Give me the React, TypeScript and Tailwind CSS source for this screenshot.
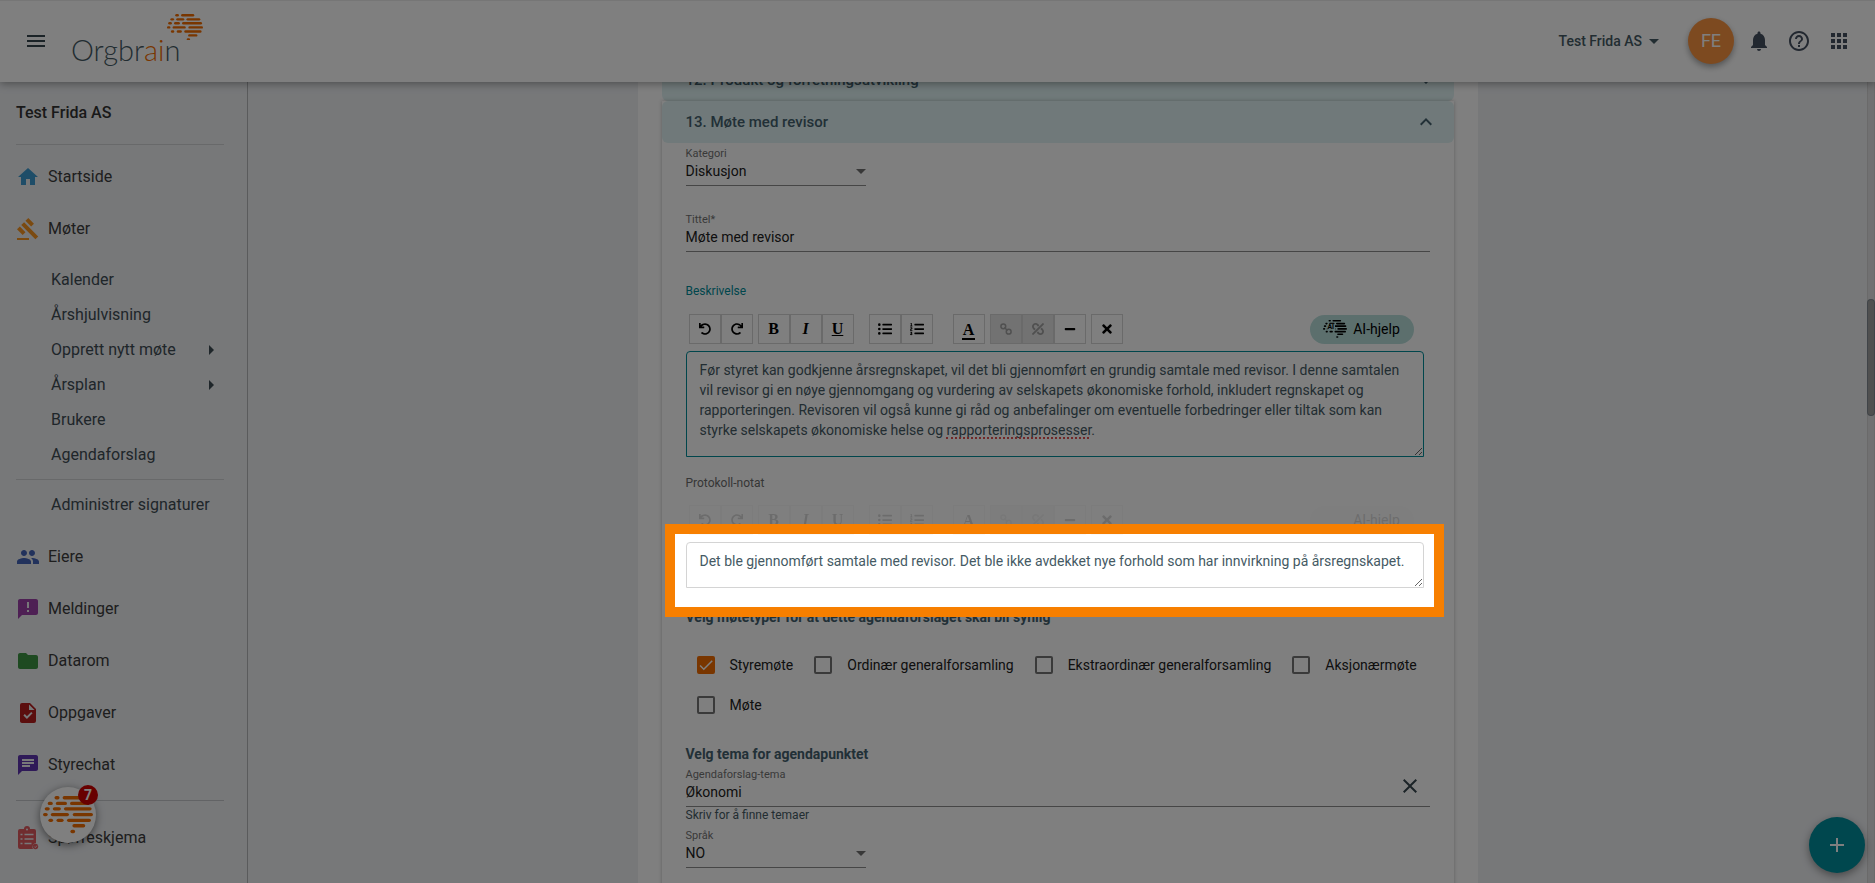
import React, { useState } from "react";
import {
  FaListOl,
  FaListUl,
  FaMinus,
  FaRedo,
  FaTimes,
  FaUndo,
  FaUnlink,
} from "react-icons/fa";
import {
  MdAdd,
  MdAnnouncement,
  MdApps,
  MdArrowDropDown,
  MdArrowRight,
  MdChat,
  MdCheck,
  MdClose,
  MdExpandLess,
  MdExpandMore,
  MdFolder,
  MdGavel,
  MdHelpOutline,
  MdHome,
  MdMenu,
  MdNotifications,
  MdPeople,
} from "react-icons/md";

const BRAIN_BARS = [
  [34, 0, 15],
  [58, 0, 54],
  [14, 17, 15],
  [38, 17, 33],
  [80, 17, 57],
  [5, 33, 15],
  [29, 33, 24],
  [62, 33, 82],
  [0, 50, 14],
  [23, 50, 54],
  [88, 50, 60],
  [16, 67, 14],
  [40, 67, 21],
  [71, 67, 71],
  [87, 83, 38],
  [81, 100, 14],
];

const Brain: React.FC<{ className: string; children?: React.ReactNode }> = ({
  className,
  children,
}) => (
  <svg viewBox="0 0 148 110" className={className} fill="currentColor">
    {BRAIN_BARS.map(([x, y, width]) => (
      <rect key={`${x}-${y}`} x={x} y={y} width={width} height="10" rx="5" />
    ))}
    {children}
  </svg>
);

const TaskIcon = () => (
  <svg viewBox="0 0 24 24" className="size-6 text-[#b71c1c]" fill="currentColor">
    <path
      fillRule="evenodd"
      d="M14 2H6a2 2 0 0 0-2 2v16c0 1.100.9 2 2 2h12a2 2 0 0 0 2-2V8l-6-6zM10.940 18L7.400 14.460l1.410-1.410 2.120 2.120 4.240-4.240 1.410 1.410L10.940 18zM13 9V3.500L18.500 9H13z"
    />
  </svg>
);

const SurveyIcon = () => (
  <svg viewBox="0 0 24 24" className="size-6" fill="none">
    <path
      d="M4 3h4a3 3 0 0 1 6 0h4a2 2 0 0 1 2 2v12a4 4 0 0 0-3 6H4a2 2 0 0 1-2-2V5a2 2 0 0 1 2-2z"
      fill="#e05a5f"
    />
    <circle cx="11" cy="3.500" r="1" fill="#eef0f3" />
    <path
      d="M4.500 8.500h2M4.500 13h2M4.500 17.500h2M8.500 8.500h9M8.500 13h9M8.500 17.500h7"
      stroke="#eef0f3"
      strokeWidth="1.600"
    />
    <circle cx="19.500" cy="20.500" r="2.700" fill="#e05a5f" />
    <path d="M18.300 20.600l1 1 1.700-2" stroke="#eef0f3" strokeWidth="0.800" />
  </svg>
);

const ChainIcon = () => (
  <svg viewBox="0 0 12 12" className="size-3" fill="none" stroke="currentColor" strokeWidth="1.500">
    <circle cx="3.300" cy="3.300" r="2.400" />
    <circle cx="8.700" cy="8.700" r="2.400" />
    <path d="M4.500 4.500l3 3" />
  </svg>
);

const NAV_ITEMS = [
  { label: "Eiere", icon: <MdPeople className="size-6 text-[#4464b8]" /> },
  { label: "Meldinger", icon: <MdAnnouncement className="size-6 text-[#9c40a8]" /> },
  { label: "Datarom", icon: <MdFolder className="size-6 text-[#3c9442]" /> },
  { label: "Oppgaver", icon: <TaskIcon /> },
  { label: "Styrechat", icon: <MdChat className="size-6 text-[#5e35b1]" /> },
];

const SUB_ITEMS = [
  { label: "Kalender" },
  { label: "Årshjulvisning" },
  { label: "Opprett nytt møte", expandable: true },
  { label: "Årsplan", expandable: true },
  { label: "Brukere" },
  { label: "Agendaforslag" },
];

const MEETING_TYPES = [
  "Styremøte",
  "Ordinær generalforsamling",
  "Ekstraordinær generalforsamling",
  "Aksjonærmøte",
  "Møte",
];

const Header = () => (
  <header className="relative z-20 flex h-[82px] shrink-0 items-center border-t border-[#ececec] bg-white px-6 pb-[2px] text-[#455a64] shadow-[0_2px_8px_rgba(0,0,0,0.35)]">
    <button aria-label="Meny" className="text-[#37474f]">
      <MdMenu className="size-6" />
    </button>
    <a href="#" className="relative mt-[18px] ml-[23px] font-['Lato',sans-serif] text-[29px] leading-9 font-light">
      Orgbr<span className="text-[#f26d00]">ai</span>n
      <Brain className="absolute -top-[18px] left-24 w-9 text-[#f26d00]" />
    </a>
    <button className="mr-[22px] ml-auto flex items-center text-sm font-medium">
      Test Frida AS
      <MdArrowDropDown className="size-6" />
    </button>
    <button className="mr-[13px] size-[46px] rounded-full bg-[#fb9440] text-lg text-white shadow-[0_3px_6px_rgba(0,0,0,0.35)]">
      FE
    </button>
    <div className="flex gap-4 text-[#455060]">
      <button aria-label="Varsler">
        <MdNotifications className="size-6" />
      </button>
      <button aria-label="Hjelp">
        <MdHelpOutline className="size-6" />
      </button>
      <button aria-label="Apper">
        <MdApps className="size-6" />
      </button>
    </div>
  </header>
);

const NavItem: React.FC<{ label: string; icon: React.ReactNode }> = ({
  label,
  icon,
}) => (
  <a href="#" className="flex h-[52px] items-center gap-2 text-[#3c3c3c]">
    {icon}
    {label}
  </a>
);

const Sidebar = () => (
  <nav className="w-[248px] shrink-0 border-r border-[#b4b6b8] pr-[23px] pl-4 text-base">
    <h2 className="flex h-[63px] items-center border-b border-[#d0d2d4] font-medium text-[#333333]">
      Test Frida AS
    </h2>
    <div className="pt-[6px]">
      <NavItem label="Startside" icon={<MdHome className="size-6 text-[#3d9bd0]" />} />
      <NavItem label="Møter" icon={<MdGavel className="size-6 text-[#f79420]" />} />
    </div>
    <ul className="border-b border-[#d0d2d4] py-[7px] text-[#3f4c54]">
      {SUB_ITEMS.map(({ label, expandable }) => (
        <li key={label}>
          <a href="#" className="flex h-[35px] items-center justify-between pr-px pl-[35px]">
            {label}
            {expandable && <MdArrowRight className="size-6" />}
          </a>
        </li>
      ))}
    </ul>
    <a href="#" className="mb-[2px] flex h-[49px] items-center pl-[35px] text-[#3f4c54]">
      Administrer signaturer
    </a>
    <div className="border-b border-[#c4c7ca] pb-[9px]">
      {NAV_ITEMS.map((item) => (
        <NavItem key={item.label} {...item} />
      ))}
    </div>
    <div className="pt-[11px]">
      <NavItem label="Spørreskjema" icon={<SurveyIcon />} />
    </div>
  </nav>
);

const PanelHeader: React.FC<{ title: string; open?: boolean }> = ({
  title,
  open,
}) => (
  <button
    type="button"
    className="flex h-[42px] w-full items-center justify-between rounded-md bg-[#e0f3f4] pr-4 pl-6 text-[15px] font-medium text-[#44616e]"
  >
    {title}
    {open ? <MdExpandLess className="size-6" /> : <MdExpandMore className="size-6" />}
  </button>
);

const SelectField: React.FC<{ id: string; label: string; value: string }> = ({
  id,
  label,
  value,
}) => (
  <div className="relative w-[180px]">
    <label htmlFor={id} className="block text-[11px] leading-[18px] text-[#737373]">
      {label}
    </label>
    <select
      id={id}
      defaultValue={value}
      className="block w-full appearance-none border-b border-[#8c8c8c] pb-[6px] text-sm leading-4 text-[#212121]"
    >
      <option>{value}</option>
    </select>
    <svg viewBox="0 0 10 5" className="pointer-events-none absolute right-0 bottom-3 w-[10px] text-[#707070]" fill="currentColor">
      <path d="M0 0h10L5 5z" />
    </svg>
  </div>
);

const TextField: React.FC<{ id: string; label: string; value: string }> = ({
  id,
  label,
  value,
}) => (
  <>
    <label htmlFor={id} className="block text-[11px] leading-[18px] text-[#737373]">
      {label}
    </label>
    <input
      id={id}
      defaultValue={value}
      className="block w-full border-b border-[#8c8c8c] pb-[6px] text-sm leading-4 text-[#212121]"
    />
  </>
);

const ToolButton: React.FC<{
  label: string;
  disabled?: boolean;
  children: React.ReactNode;
}> = ({ label, disabled, children }) => (
  <button
    type="button"
    aria-label={label}
    disabled={disabled}
    className="flex h-[30px] w-8 items-center justify-center border border-[#d4d4d4] font-['Liberation_Serif',serif] text-base leading-4 font-bold text-black disabled:bg-[#e4e4e4] disabled:text-[#a0a0a0]"
  >
    {children}
  </button>
);

const Toolbar: React.FC<{ inactive?: boolean }> = ({ inactive }) => (
  <div className={`flex items-center pr-[10px] pl-[3px] ${inactive ? "opacity-15" : ""}`}>
    <div className="mr-[5px] flex">
      <ToolButton label="Angre"><FaUndo className="size-3" /></ToolButton>
      <ToolButton label="Gjør om"><FaRedo className="size-3" /></ToolButton>
    </div>
    <div className="mr-[15px] flex">
      <ToolButton label="Fet">B</ToolButton>
      <ToolButton label="Kursiv"><i>I</i></ToolButton>
      <ToolButton label="Understreket"><u>U</u></ToolButton>
    </div>
    <div className="mr-5 flex">
      <ToolButton label="Punktliste"><FaListUl className="size-[14px]" /></ToolButton>
      <ToolButton label="Nummerert liste"><FaListOl className="size-[14px]" /></ToolButton>
    </div>
    <div className="mr-[5px] flex">
      <ToolButton label="Tekstfarge">
        <span className="border-b-2 border-black px-px pt-1">A</span>
      </ToolButton>
    </div>
    <div className="mr-[5px] flex">
      <ToolButton label="Lenke" disabled><ChainIcon /></ToolButton>
      <ToolButton label="Fjern lenke" disabled><FaUnlink className="size-3 -scale-x-100" /></ToolButton>
      <ToolButton label="Linje"><FaMinus className="size-3" /></ToolButton>
    </div>
    <ToolButton label="Fjern formatering"><FaTimes className="size-[14px]" /></ToolButton>
    <button
      type="button"
      className={`ml-auto flex h-[29px] w-[104px] items-center justify-center gap-[6px] rounded-full text-sm text-black ${
        inactive ? "bg-[#ececec]" : "bg-[#b8dedb]"
      }`}
    >
      <Brain className={inactive ? "w-6 opacity-0" : "w-6"}>
        <rect x="26" y="24" width="48" height="38" className="fill-[#b8dedb]" />
        <text x="28" y="58" fontSize="42" fontWeight="bold">AI</text>
      </Brain>
      AI-hjelp
    </button>
  </div>
);

const DESCRIPTION =
  "Før styret kan godkjenne årsregnskapet, vil det bli gjennomført en grundig samtale med revisor. I denne samtalen vil revisor gi en nøye gjennomgang og vurdering av selskapets økonomiske forhold, inkludert regnskapet og rapporteringen. Revisoren vil også kunne gi råd og anbefalinger om eventuelle forbedringer eller tiltak som kan styrke selskapets økonomiske helse og rapporteringsprosesser.";

const NOTE =
  "Det ble gjennomført samtale med revisor. Det ble ikke avdekket nye forhold som har innvirkning på årsregnskapet.";

const AgendaForm = () => {
  const [types, setTypes] = useState<string[]>(["Styremøte"]);

  const toggleType = (type: string) => {
    setTypes((current) =>
      current.includes(type)
        ? current.filter((item) => item !== type)
        : [...current, type]
    );
  };

  return (
    <form className="px-6 pt-[2px] pb-10">
      <SelectField id="category" label="Kategori" value="Diskusjon" />

      <div className="mt-[25px]">
        <TextField id="title" label="Tittel*" value="Møte med revisor" />
      </div>

      <div className="mt-[31px] mr-[6px]">
        <label htmlFor="description" className="mb-[15px] block text-xs leading-4 text-[#008c99]">
          Beskrivelse
        </label>
        <Toolbar />
        <div className="relative mt-[7px]">
          <textarea
            id="description"
            rows={4}
            spellCheck={false}
            defaultValue={DESCRIPTION}
            className="block w-full resize-y rounded-t border border-[#008c99] px-[13px] pt-2 pb-4 text-sm leading-5 text-[#455a64]"
          />
          {/* spell check mark */}
          <span className="pointer-events-none absolute bottom-[18px] left-[260px] w-[143px] border-b-2 border-dotted border-[#e05050]" />
        </div>
      </div>

      <div className="mt-[18px] mr-[6px]">
        <label htmlFor="note" className="mb-[14px] block text-xs leading-4 text-[#6c6c6c]">
          Protokoll-notat
        </label>
        <Toolbar inactive />
        <div className="relative mt-[7px]">
          <textarea
            id="note"
            rows={1}
            spellCheck={false}
            defaultValue={NOTE}
            className="block w-full resize-y rounded-t border border-[#d4d4d4] px-[13px] pt-2 pb-4 text-sm leading-5 text-[#455a64]"
          />
          {/* tour spotlight, its shadow dims the rest of the page */}
          <div className="pointer-events-none absolute -top-[18px] -right-5 -bottom-[29px] -left-[21px] z-50 border-10 border-[#f77f00] shadow-[0_0_0_9999px_rgba(0,0,0,0.5)]" />
        </div>
      </div>

      <fieldset className="mt-[19px]">
        <legend className="text-sm leading-5 font-bold text-[#44616e]">
          Velg møtetyper for at dette agendaforslaget skal bli synlig
        </legend>
        <div className="mt-[18px] flex flex-wrap gap-x-[21px] pl-[11px]">
          {MEETING_TYPES.map((type) => (
            <label key={type} className="flex h-10 items-center gap-[15px] text-sm text-[#212121]">
              <span className="relative">
                <input
                  type="checkbox"
                  checked={types.includes(type)}
                  onChange={() => toggleType(type)}
                  className="peer block size-[18px] appearance-none rounded-xs border-2 border-[#757575] checked:border-[#f26d00] checked:bg-[#f26d00]"
                />
                <MdCheck className="pointer-events-none absolute inset-0 hidden size-[18px] text-white peer-checked:block" />
              </span>
              {type}
            </label>
          ))}
        </div>
      </fieldset>

      <h3 className="mt-[19px] text-sm leading-5 font-bold text-[#44616e]">
        Velg tema for agendapunktet
      </h3>
      <div className="relative mt-[2px]">
        <TextField id="topic" label="Agendaforslag-tema" value="Økonomi" />
        <button type="button" aria-label="Fjern tema" className="absolute top-2 right-2 text-[#37474f]">
          <MdClose className="size-6" />
        </button>
      </div>
      <p className="mb-1 text-xs leading-4 text-[#455a64]">Skriv for å finne temaer</p>
      <SelectField id="language" label="Språk" value="NO" />
    </form>
  );
};

const App: React.FC = () => {
  return (
    <div className="relative flex h-screen flex-col overflow-hidden bg-[#eef0f3] font-['Roboto',sans-serif]">
      <Header />
      <div className="flex min-h-0 flex-1">
        <Sidebar />
        <main className="-mt-[23px] flex-1">
          <div className="mx-auto w-full max-w-[840px] bg-white px-6">
            <PanelHeader title="12. Produkt og forretningsutvikling" />
            <section className="bg-white shadow-[0_0_4px_rgba(0,0,0,0.25)]">
              <PanelHeader title="13. Møte med revisor" open />
              <AgendaForm />
            </section>
          </div>
        </main>
        <div className="w-2 border-x border-[#d4d4d4] bg-[#e2e2e4] pt-[218px]">
          <div className="h-[115px] rounded bg-[#a0a0a0] ring-1 ring-[#808890]" />
        </div>
      </div>

      <button
        aria-label="Åpne chat"
        className="absolute bottom-10 left-10 z-10 flex size-14 items-center justify-center rounded-full bg-white shadow-[0_2px_8px_rgba(0,0,0,0.5)]"
      >
        <Brain className="w-[50px] text-[#f26d00]" />
        <span className="absolute -top-[2px] -right-[2px] size-5 rounded-full bg-[#d00000] text-sm leading-5 font-bold text-white">
          7
        </span>
      </button>
      <button
        aria-label="Legg til"
        className="absolute right-[10px] bottom-[10px] z-10 flex size-14 items-center justify-center rounded-full bg-[#008e9c] text-white shadow-[0_3px_8px_rgba(0,0,0,0.4)]"
      >
        <MdAdd className="size-6" />
      </button>
    </div>
  );
};

export default App;
